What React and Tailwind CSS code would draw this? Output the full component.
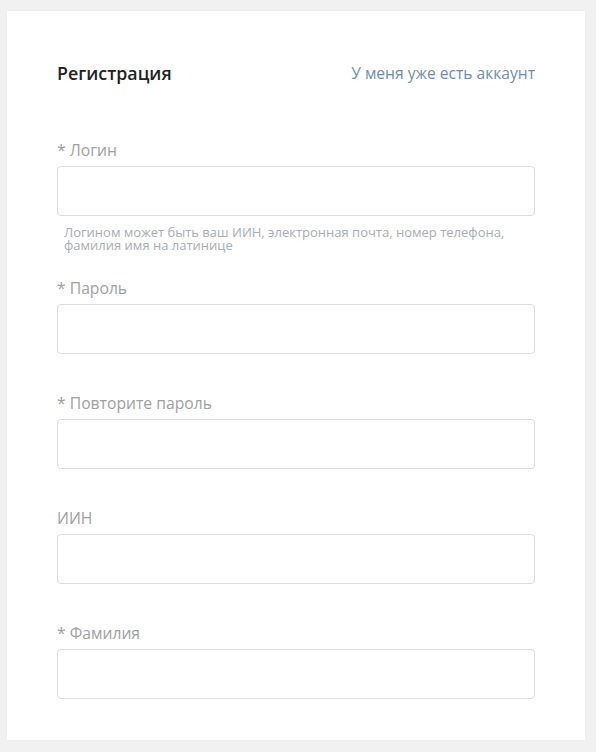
import React from 'react';

const fields = [
  { label: '* Логин', hint: 'Логином может быть ваш ИИН, электронная почта, номер телефона, фамилия имя на латинице' },
  { label: '* Пароль' },
  { label: '* Повторите пароль' },
  { label: 'ИИН' },
  { label: '* Фамилия' }
];

function Field({ label, hint }) {
  return (
    <div className={hint ? 'mb-[24px]' : 'mb-[37px] last:mb-0'}>
      <label className="block text-[15.7px] leading-[24px] text-[#a0a0a0]">
        {label}
      </label>
      <input
        type="text"
        className="mt-[4px] block h-[50px] w-full rounded-[4px] border border-[#dddce3] bg-white px-3 outline-none"
      />
      {hint && (
        <p className="mt-[10px] px-[7px] text-[13px] leading-[13px] text-[#a9adb4]">
          {hint}
        </p>
      )}
    </div>
  );
}

export default function App() {
  return (
    <div className="min-h-[752px] bg-[#f1f1f1] pt-[11px] pl-[7px] font-['Open_Sans',sans-serif]">
      <div className="w-[578px] h-[729px] bg-white px-[50px] pt-[50px] shadow-[0_0_3px_rgba(0,0,0,0.04)]">
        <div className="mb-[53px] flex items-center justify-between">
          <h1 className="text-[17.8px] leading-[24px] font-semibold text-[#222]">
            Регистрация
          </h1>
          <a href="#" className="text-[15.6px] leading-[24px] text-[#6d8db5]">
            У меня уже есть аккаунт
          </a>
        </div>

        {fields.map(f => (
          <Field key={f.label} label={f.label} hint={f.hint} />
        ))}
      </div>
    </div>
  );
}
